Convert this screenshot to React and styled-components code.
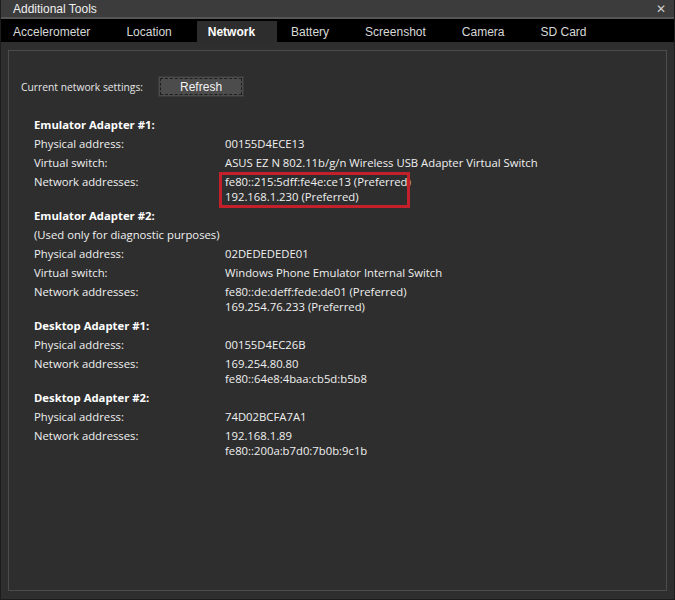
import React from 'react';
import styled, { createGlobalStyle } from 'styled-components';

const GlobalStyle = createGlobalStyle`
  html, body {
    margin: 0;
    padding: 0;
    background: #2e2e2e;
  }
`;

const tabs = ['Accelerometer', 'Location', 'Network', 'Battery', 'Screenshot', 'Camera', 'SD Card'];

const adapters = [
  {
    name: 'Emulator Adapter #1:',
    physical: '00155D4ECE13',
    virtualSwitch: 'ASUS EZ N 802.11b/g/n Wireless USB Adapter Virtual Switch',
    addresses: ['fe80::215:5dff:fe4e:ce13 (Preferred)', '192.168.1.230 (Preferred)'],
    highlight: true,
  },
  {
    name: 'Emulator Adapter #2:',
    note: '(Used only for diagnostic purposes)',
    physical: '02DEDEDEDE01',
    virtualSwitch: 'Windows Phone Emulator Internal Switch',
    addresses: ['fe80::de:deff:fede:de01 (Preferred)', '169.254.76.233 (Preferred)'],
  },
  {
    name: 'Desktop Adapter #1:',
    physical: '00155D4EC26B',
    addresses: ['169.254.80.80', 'fe80::64e8:4baa:cb5d:b5b8'],
  },
  {
    name: 'Desktop Adapter #2:',
    physical: '74D02BCFA7A1',
    addresses: ['192.168.1.89', 'fe80::200a:b7d0:7b0b:9c1b'],
  },
];

const App = () => {
  return (
    <>
      <GlobalStyle />
      <Window>
        <TitleBar>
          <Title>Additional Tools</Title>
          <Close>✕</Close>
        </TitleBar>
        <TabBar>
          {tabs.map((t) => (
            <Tab key={t} $active={t === 'Network'}>{t}</Tab>
          ))}
        </TabBar>
        <Content>
          <Panel>
            <SettingsRow>
              <SettingsLabel>Current network settings:</SettingsLabel>
              <RefreshButton>Refresh</RefreshButton>
            </SettingsRow>
            <AdapterList>
              {adapters.map((a) => (
                <Adapter key={a.name}>
                  <AdapterName>{a.name}</AdapterName>
                  {a.note && <Row><Label>{a.note}</Label></Row>}
                  <Row>
                    <Label>Physical address:</Label>
                    <Value>{a.physical}</Value>
                  </Row>
                  {a.virtualSwitch && (
                    <Row>
                      <Label>Virtual switch:</Label>
                      <Value>{a.virtualSwitch}</Value>
                    </Row>
                  )}
                  <Row>
                    <Label>Network addresses:</Label>
                    <Addresses $highlight={a.highlight}>
                      {a.addresses.map((addr) => (
                        <div key={addr}>{addr}</div>
                      ))}
                    </Addresses>
                  </Row>
                </Adapter>
              ))}
            </AdapterList>
          </Panel>
        </Content>
      </Window>
    </>
  );
};

const Window = styled.div`
  width: 675px;
  height: 600px;
  box-sizing: border-box;
  display: flex;
  flex-direction: column;
  background: #2e2e2e;
  border-left: 1px solid #1c1c1c;
  border-right: 1px solid #1c1c1c;
  border-bottom: 1px solid #1c1c1c;
  color: #f0f0f0;
  font-family: "Open Sans", "Noto Sans", sans-serif;
  font-size: 11.3px;
`;

const TitleBar = styled.div`
  height: 17px;
  display: flex;
  align-items: center;
  justify-content: space-between;
  background: #3c3c3c;
  border-bottom: 2px solid #565656;
  padding: 0 8px 0 12px;
`;

const Title = styled.span`
  font-family: "Liberation Sans", Arial, sans-serif;
  font-size: 12px;
  color: #f0f0f0;
`;

const Close = styled.span`
  font-family: "DejaVu Sans", sans-serif;
  font-size: 12px;
  color: #cfcfcf;
`;

const TabBar = styled.div`
  height: 23px;
  display: flex;
  align-items: flex-end;
  background: #000;
  padding-left: 1px;
`;

const Tab = styled.div`
  height: 21px;
  box-sizing: border-box;
  display: flex;
  align-items: center;
  padding: ${(p) => (p.$active ? '0 22px 0 11px' : '0 25px 0 11px')};
  margin-right: ${(p) => (p.$active ? '3px' : '0')};
  font-family: "Liberation Sans", Arial, sans-serif;
  font-size: 12px;
  font-weight: ${(p) => (p.$active ? 700 : 400)};
  color: ${(p) => (p.$active ? '#ffffff' : '#d8d8d8')};
  background: ${(p) => (p.$active ? '#2d2d2d' : 'transparent')};
`;

const Content = styled.div`
  flex: 1;
  display: flex;
  padding: 8px 7px 8px 7px;
  background: #2e2e2e;
`;

const Panel = styled.div`
  flex: 1;
  border: 1px solid #4c4c4c;
  padding: 25px 0 0 12px;
`;

const SettingsRow = styled.div`
  display: flex;
  align-items: center;
  gap: 15px;
  color: #e6e6e6;
`;

const SettingsLabel = styled.span`
  font-size: 10.3px;
  padding-top: 1px;
`;

const RefreshButton = styled.div`
  width: 86px;
  height: 21px;
  box-sizing: border-box;
  display: flex;
  align-items: center;
  justify-content: center;
  background: #4c4c4c;
  border: 1px solid #3a3a3a;
  outline: 1px dashed #1e1e1e;
  outline-offset: -3px;
  font-family: "Liberation Sans", Arial, sans-serif;
  font-size: 12px;
  color: #f2f2f2;
`;

const AdapterList = styled.div`
  display: flex;
  flex-direction: column;
  padding: 19px 0 0 13px;
`;

const Adapter = styled.div`
  display: flex;
  flex-direction: column;
`;

const AdapterName = styled.div`
  height: 18px;
  line-height: 18px;
  font-weight: 700;
  color: #ffffff;
`;

const Row = styled.div`
  display: flex;
  min-height: 19px;
  line-height: 15px;
  padding-top: 2px;
  box-sizing: border-box;
`;

const Label = styled.div`
  width: 191px;
  flex-shrink: 0;
  white-space: nowrap;
`;

const Value = styled.div`
  white-space: nowrap;
`;

const Addresses = styled.div`
  position: relative;
  white-space: nowrap;
  padding-bottom: 3px;

  &::after {
    content: '';
    display: ${(p) => (p.$highlight ? 'block' : 'none')};
    position: absolute;
    left: -6px;
    top: -2px;
    width: 191px;
    height: 36px;
    box-sizing: border-box;
    border: 3px solid #c4202b;
  }
`;

export default App;
